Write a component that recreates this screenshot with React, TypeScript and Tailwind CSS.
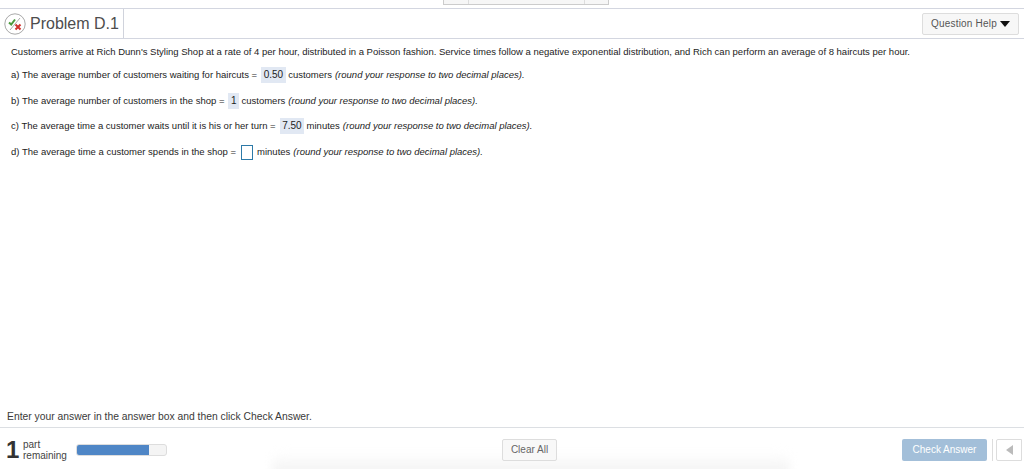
const Answer = ({ children }: { children: string }) => (
  <span className="ml-[4px] mr-[2.5px] flex h-[16px] items-center bg-[#e1e8f3] px-[2.5px] text-[10px]">{children}</span>
);

const Hint = () => <i className="ml-[3px]">(round your response to two decimal places).</i>;

export default function App() {
  return (
    <div className="relative flex h-[469px] w-[1024px] flex-col overflow-hidden bg-white font-['Liberation_Sans',sans-serif] text-[#1c1c1c]">
      {/* top strip */}
      <div className="flex h-[8px] justify-start pl-[443px]">
        <div className="flex h-[5px] w-[166px] border-x border-b border-[#ccc] bg-[#f6f6f6]">
          <div className="w-[25px] border-r border-[#ddd]" />
          <div className="w-[116px] border-r border-[#ddd]" />
        </div>
      </div>

      {/* header */}
      <div className="flex h-[31px] items-center justify-between border-y border-[#d3d6e0] pr-[5px]">
        <div className="flex h-full w-[124px] items-center border-r border-[#d0d3dc] pl-[4px]">
          <svg width="22" height="22" viewBox="0 0 22 22" fill="none">
            <circle cx="11" cy="11" r="10.2" stroke="#a9a9a9" strokeWidth="1" />
            <path d="M5 9.5l2.2 2 3.8-5" stroke="#4a9a3c" strokeWidth="2" />
            <path d="M11.5 11.5l5 5M16.5 11.5l-5 5" stroke="#d0312d" strokeWidth="2" />
            <path d="M6 17L16 5" stroke="#888" strokeWidth="0.7" />
          </svg>
          <span className="ml-[4px] text-[16px] text-[#4d4d4d]">Problem D.1</span>
        </div>
        <button className="flex h-[22px] w-[97px] items-center justify-center gap-[3px] rounded-[2px] border border-[#ddd] bg-[#f7f7f7] text-[10px] tracking-[0.2px] text-[#555]">
          Question Help
          <svg width="10" height="6" viewBox="0 0 10 6"><path d="M0 0h10L5 6z" fill="#111" /></svg>
        </button>
      </div>

      {/* question */}
      <div className="flex flex-1 flex-col whitespace-nowrap px-[11px] pt-[7px] text-[9.5px] leading-[12px]">
        <p>Customers arrive at Rich Dunn's Styling Shop at a rate of 4 per hour, distributed in a Poisson fashion. Service times follow a negative exponential distribution, and Rich can perform an average of 8 haircuts per hour.</p>
        <div className="mt-[9px] flex h-[16px] items-center">
          <span>a) The average number of customers waiting for haircuts =</span>
          <Answer>0.50</Answer> customers <Hint />
        </div>
        <div className="mt-[10px] flex h-[16px] items-center">
          <span>b) The average number of customers in the shop =</span>
          <Answer>1</Answer> customers <Hint />
        </div>
        <div className="mt-[9px] flex h-[16px] items-center">
          <span>c) The average time a customer waits until it is his or her turn =</span>
          <Answer>7.50</Answer> minutes <Hint />
        </div>
        <div className="mt-[10px] flex h-[16px] items-center">
          <span>d) The average time a customer spends in the shop =</span>
          <span className="ml-[5px] mr-[4px] h-[15px] w-[12px] border border-[#2d7aa8]" /> minutes <Hint />
        </div>
      </div>

      <div className="pb-[4px] pl-[7px] text-[10.33px] leading-[12px] text-[#3a3a3a]">Enter your answer in the answer box and then click Check Answer.</div>

      {/* footer */}
      <div className="relative flex h-[42px] items-center border-t border-[#dcdfe3] pt-[2px]">
        <div className="absolute -bottom-[8px] left-[272px] h-[26px] w-[518px] rounded-t-[10px] bg-[linear-gradient(to_bottom,#ffffff,#f1f1f1)] blur-[5px]" />
        <span className="relative ml-[6px] w-[17px] text-[24px] font-bold leading-none text-[#333]">1</span>
        <div className="relative w-[53px] text-[10px] leading-[11px] text-[#444]">
          <div>part</div>
          <div>remaining</div>
        </div>
        <div className="relative h-[12px] w-[91px] overflow-hidden rounded-[3px] border border-[#ddd] bg-[#f4f4f4]">
          <div className="absolute -left-px -top-px h-[12px] w-[73px] rounded-l-[3px] bg-[#4f86c6]" />
        </div>
        <button className="relative ml-[335px] h-[22px] w-[55px] rounded-[2px] border border-[#ddd] bg-[#f8f8f8] text-[10px] text-[#666]">Clear All</button>
        <button className="relative ml-[345px] h-[22px] w-[85px] rounded-[2px] bg-[#a3bfd9] text-[10px] text-white">Check Answer</button>
        <div className="relative ml-[5px] mr-[1px] h-[22px] w-[1px] bg-[#ddd]" />
        <button className="relative ml-[2px] flex h-[22px] w-[26px] items-center justify-center rounded-l-[2px] border border-[#ddd] bg-white">
          <svg width="7" height="10" viewBox="0 0 7 10"><path d="M7 0v10L0 5z" fill="#bbb" /></svg>
        </button>
      </div>
    </div>
  );
}
